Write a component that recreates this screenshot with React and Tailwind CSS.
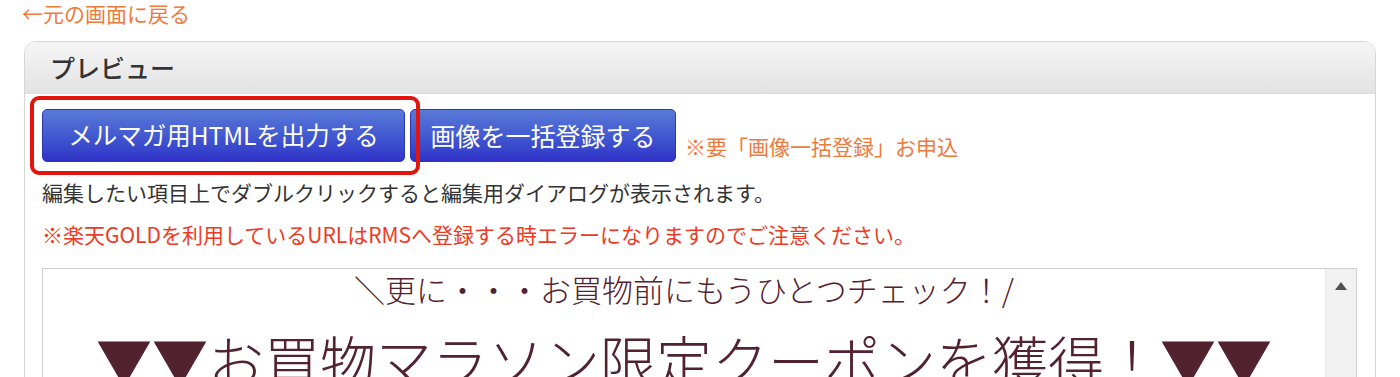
export default function App() {
  const jp = { fontFamily: '"Noto Sans CJK JP", "Noto Sans", sans-serif' };

  return (
    <div className="h-[377px] w-[1400px] overflow-hidden bg-white" style={jp}>
      <div className="pl-[22px] h-[41px]">
        <a href="#" className="block text-[21px] leading-[26px] text-[#ee7a3c]">
          ←元の画面に戻る
        </a>
      </div>

      <div className="mx-[24px] border border-[#d6d6d6] rounded-t-[12px] h-[400px]">
        <div className="h-[52px] flex items-center pl-[25px] rounded-t-[11px] border-b border-[#dcdcdc] bg-gradient-to-b from-[#f5f5f5] to-[#e3e3e3]">
          <h2 className="text-[25px] font-medium text-[#333]">プレビュー</h2>
        </div>

        <div className="pl-[17px] pr-[18px] pt-[15px]">
          <div className="relative flex items-end">
            <button className="w-[363px] h-[53px] rounded-[5px] border border-[#2b36b5] bg-gradient-to-b from-[#5a7ad8] to-[#3131c8] text-white text-[24.5px]">
              メルマガ用HTMLを出力する
            </button>
            <button className="ml-[5px] w-[266px] h-[53px] rounded-[5px] border border-[#2b36b5] bg-gradient-to-b from-[#5a7ad8] to-[#3131c8] text-white text-[25px]">
              画像を一括登録する
            </button>
            <span className="ml-[9px] mb-[3px] text-[21px] leading-[26px] text-[#ee7a3c]">
              ※要「画像一括登録」お申込
            </span>
            <div className="absolute left-[-12px] top-[-13px] w-[390px] h-[79px] border-[4px] border-[#e3140c] rounded-[9px]" />
          </div>

          <p className="mt-[9px] text-[21px] leading-[42px] text-[#333]">
            編集したい項目上でダブルクリックすると編集用ダイアログが表示されます。
          </p>
          <p className="text-[21px] leading-[42px] text-[#ee3a24]">
            ※楽天GOLDを利用しているURLはRMSへ登録する時エラーになりますのでご注意ください。
          </p>

          <div className="mt-[13px] flex border border-[#cfcfcf] h-[200px]">
            <div className="flex-1 text-center text-[#52222f] font-light">
              <p className="mt-[4px] text-[31px] leading-[32px]">
                ＼更に・・・お買物前にもうひとつチェック！/
              </p>
              <p className="mt-[22px] text-[56px] leading-[64px]">
                ▼▼お買物マラソン限定クーポンを獲得！▼▼
              </p>
            </div>
            <div className="w-[31px] bg-[#f1f1f1] border-l border-[#e6e6e6] flex justify-center pt-[13px]">
              <svg width="12" height="8" viewBox="0 0 12 8">
                <path d="M6 0 L12 8 L0 8 Z" fill="#505050" />
              </svg>
            </div>
          </div>
        </div>
      </div>
    </div>
  );
}
